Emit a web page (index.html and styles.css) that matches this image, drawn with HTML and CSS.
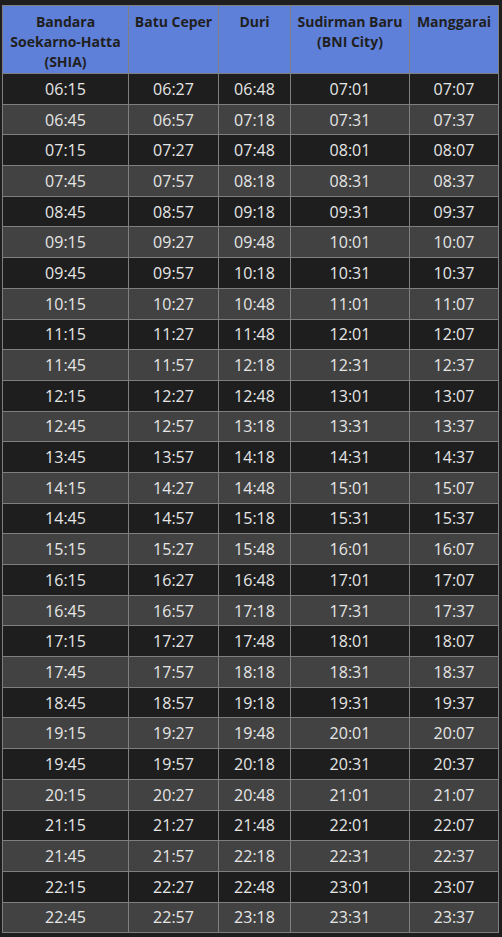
FILE: index.html
```html
<!DOCTYPE html>
<html>
<head>
<meta charset="utf-8">
<link rel="stylesheet" href="styles.css">
</head>
<body>
<table class="schedule">
<colgroup>
<col class="c1"><col class="c2"><col class="c3"><col class="c4"><col class="c5">
</colgroup>
<thead>
<tr>
<th>Bandara Soekarno-Hatta (SHIA)</th>
<th>Batu Ceper</th>
<th>Duri</th>
<th>Sudirman Baru (BNI City)</th>
<th>Manggarai</th>
</tr>
</thead>
<tbody>
<tr><td>06:15</td><td>06:27</td><td>06:48</td><td>07:01</td><td>07:07</td></tr>
<tr><td>06:45</td><td>06:57</td><td>07:18</td><td>07:31</td><td>07:37</td></tr>
<tr><td>07:15</td><td>07:27</td><td>07:48</td><td>08:01</td><td>08:07</td></tr>
<tr><td>07:45</td><td>07:57</td><td>08:18</td><td>08:31</td><td>08:37</td></tr>
<tr><td>08:45</td><td>08:57</td><td>09:18</td><td>09:31</td><td>09:37</td></tr>
<tr><td>09:15</td><td>09:27</td><td>09:48</td><td>10:01</td><td>10:07</td></tr>
<tr><td>09:45</td><td>09:57</td><td>10:18</td><td>10:31</td><td>10:37</td></tr>
<tr><td>10:15</td><td>10:27</td><td>10:48</td><td>11:01</td><td>11:07</td></tr>
<tr><td>11:15</td><td>11:27</td><td>11:48</td><td>12:01</td><td>12:07</td></tr>
<tr><td>11:45</td><td>11:57</td><td>12:18</td><td>12:31</td><td>12:37</td></tr>
<tr><td>12:15</td><td>12:27</td><td>12:48</td><td>13:01</td><td>13:07</td></tr>
<tr><td>12:45</td><td>12:57</td><td>13:18</td><td>13:31</td><td>13:37</td></tr>
<tr><td>13:45</td><td>13:57</td><td>14:18</td><td>14:31</td><td>14:37</td></tr>
<tr><td>14:15</td><td>14:27</td><td>14:48</td><td>15:01</td><td>15:07</td></tr>
<tr><td>14:45</td><td>14:57</td><td>15:18</td><td>15:31</td><td>15:37</td></tr>
<tr><td>15:15</td><td>15:27</td><td>15:48</td><td>16:01</td><td>16:07</td></tr>
<tr><td>16:15</td><td>16:27</td><td>16:48</td><td>17:01</td><td>17:07</td></tr>
<tr><td>16:45</td><td>16:57</td><td>17:18</td><td>17:31</td><td>17:37</td></tr>
<tr><td>17:15</td><td>17:27</td><td>17:48</td><td>18:01</td><td>18:07</td></tr>
<tr><td>17:45</td><td>17:57</td><td>18:18</td><td>18:31</td><td>18:37</td></tr>
<tr><td>18:45</td><td>18:57</td><td>19:18</td><td>19:31</td><td>19:37</td></tr>
<tr><td>19:15</td><td>19:27</td><td>19:48</td><td>20:01</td><td>20:07</td></tr>
<tr><td>19:45</td><td>19:57</td><td>20:18</td><td>20:31</td><td>20:37</td></tr>
<tr><td>20:15</td><td>20:27</td><td>20:48</td><td>21:01</td><td>21:07</td></tr>
<tr><td>21:15</td><td>21:27</td><td>21:48</td><td>22:01</td><td>22:07</td></tr>
<tr><td>21:45</td><td>21:57</td><td>22:18</td><td>22:31</td><td>22:37</td></tr>
<tr><td>22:15</td><td>22:27</td><td>22:48</td><td>23:01</td><td>23:07</td></tr>
<tr><td>22:45</td><td>22:57</td><td>23:18</td><td>23:31</td><td>23:37</td></tr>
</tbody>
</table>
</body>
</html>
```
FILE: styles.css
```css
html, body {
  margin: 0;
  padding: 0;
  background: #1e1e1e;
}
body {
  padding: 5px 0 0 2px;
  font-family: "Open Sans", "Noto Sans", sans-serif;
}
.schedule {
  border-collapse: collapse;
  table-layout: fixed;
  width: 496px;
}
.c1 { width: 126px; }
.c2 { width: 90px; }
.c3 { width: 72px; }
.c4 { width: 119px; }
.c5 { width: 89px; }
.schedule th,
.schedule td {
  border: 1px solid #7f7f7f;
  text-align: center;
  padding: 0;
}
.schedule th {
  background: #5f80d8;
  color: #1f1f1f;
  font-weight: 700;
  font-size: 14px;
  line-height: 20px;
  vertical-align: top;
  height: 68px;
  padding: 6px 2px 0;
  box-sizing: border-box;
}
.schedule td {
  color: #e6e6e6;
  font-size: 16px;
  height: 29.7px;
  line-height: 20px;
  vertical-align: middle;
}
.schedule tbody tr:nth-child(odd) td { background: #1e1e1e; }
.schedule tbody tr:nth-child(even) td { background: #424242; }
```
